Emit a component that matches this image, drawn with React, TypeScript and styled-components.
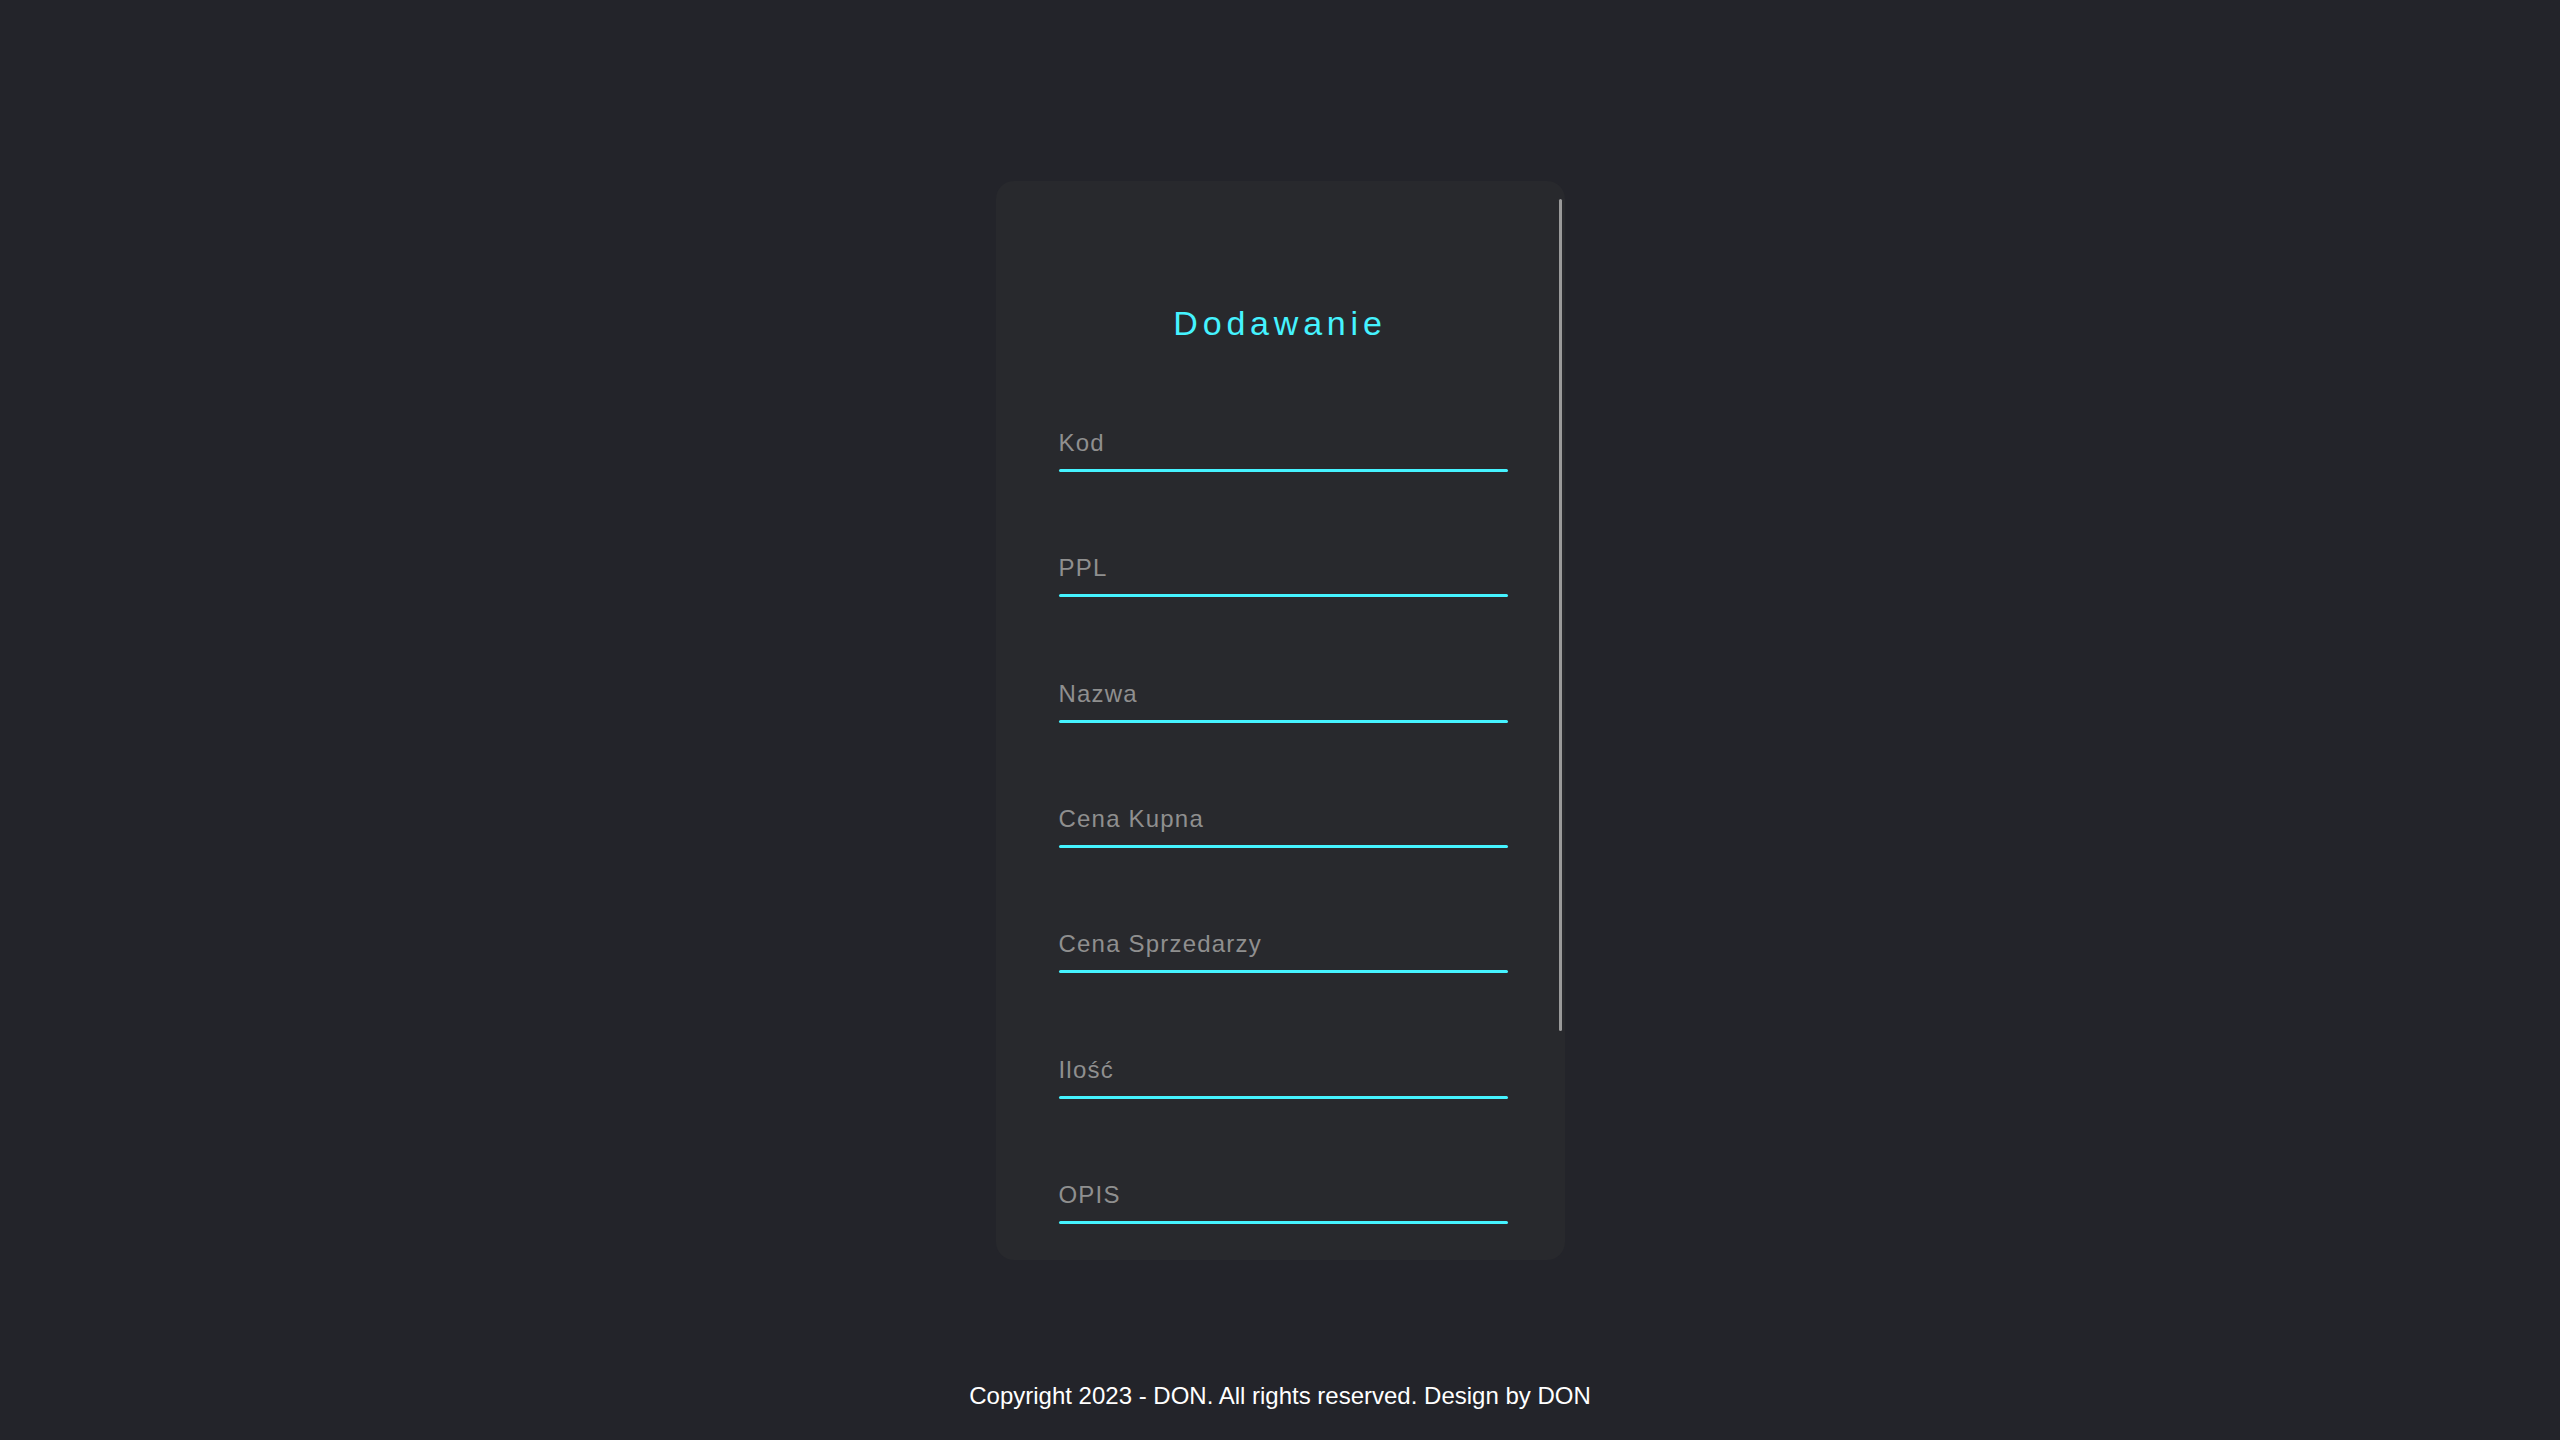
import styled, { createGlobalStyle } from "styled-components";

const GlobalStyle = createGlobalStyle`
  * {
    box-sizing: border-box;
  }

  body {
    margin: 0;
    background: #23242a;
    font-family: "Liberation Sans", Arial, sans-serif;
  }
`;

const fields = [
  "Kod",
  "PPL",
  "Nazwa",
  "Cena Kupna",
  "Cena Sprzedarzy",
  "Ilość",
  "OPIS",
];

const App = () => {
  return (
    <>
      <GlobalStyle />
      <Page>
        <Card>
          <Scroller>
            <Form onSubmit={(e) => e.preventDefault()}>
              <Title>Dodawanie</Title>
              {fields.map((name) => (
                <Field key={name}>
                  <Input type="text" required />
                  <Label>{name}</Label>
                  <Line />
                </Field>
              ))}
            </Form>
          </Scroller>
          <Track>
            <Thumb />
          </Track>
        </Card>
        <Footer>Copyright 2023 - DON. All rights reserved. Design by DON</Footer>
      </Page>
    </>
  );
};

const Page = styled.div`
  display: grid;
  grid-template-rows: 1fr auto 1fr;
  justify-items: center;
  min-height: 100vh;
`;

const Card = styled.div`
  grid-row: 2;
  display: flex;
  width: 569px;
  height: 1079px;
  background: #28292d;
  border-radius: 18px;
  overflow: hidden;
`;

const Scroller = styled.div`
  flex: 1;
  overflow-y: auto;
  scrollbar-width: none;
  padding: 123px 48px 310px 63px;

  &::-webkit-scrollbar {
    display: none;
  }
`;

const Track = styled.div`
  flex: 0 0 9px;
  padding: 18px 3px;
`;

const Thumb = styled.div`
  width: 3px;
  height: 832px;
  background: #9a9a9a;
  border-radius: 2px;
`;

const Form = styled.form`
  display: flex;
  flex-direction: column;
  gap: 82.4px;
`;

const Title = styled.h2`
  margin: 0 0 4px;
  padding-right: 6px;
  color: #45f3ff;
  font-size: 34px;
  font-weight: 400;
  letter-spacing: 4.8px;
  text-align: center;
`;

const Field = styled.div`
  position: relative;
  width: 100%;
`;

const Input = styled.input`
  display: block;
  width: 100%;
  height: 40px;
  padding: 0;
  border: none;
  outline: none;
  background: transparent;
  color: #fff;
  font-family: inherit;
  font-size: 24px;
  letter-spacing: 0.05em;
`;

const Label = styled.span`
  position: absolute;
  top: 0;
  left: 0;
  line-height: 27px;
  color: #8f8f8f;
  font-size: 24px;
  letter-spacing: 0.05em;
  pointer-events: none;
`;

const Line = styled.i`
  display: block;
  width: 100%;
  height: 3px;
  background: #45f3ff;
  border-radius: 4px;
`;

const Footer = styled.footer`
  grid-row: 3;
  align-self: end;
  padding-bottom: 30px;
  color: #fff;
  font-size: 24px;
`;

export default App;
